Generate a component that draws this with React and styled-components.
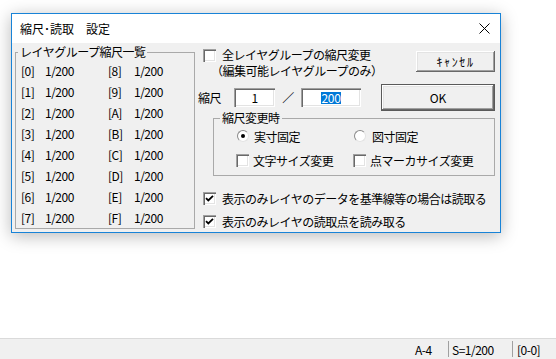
import React from "react";
import styled, { createGlobalStyle } from "styled-components";

const GlobalStyle = createGlobalStyle`
  html, body { margin: 0; padding: 0; background: #fff; }
  body {
    font-family: "Noto Sans CJK JP", "Noto Sans", sans-serif;
    font-size: 12px;
    letter-spacing: -0.5px;
    color: #000;
  }
`;

const Screen = styled.div`
  width: 556px;
  height: 359px;
  display: flex;
  flex-direction: column;
  overflow: hidden;
`;

const Dialog = styled.div`
  margin: 13px 0 0 11px;
  width: 490px;
  height: 220px;
  box-sizing: border-box;
  border: 1px solid #1883d7;
  background: #f0f0f0;
  box-shadow: 0 3px 16px rgba(0, 0, 0, 0.28);
  display: flex;
  flex-direction: column;
`;

const TitleBar = styled.div`
  height: 29px;
  background: #fff;
  display: flex;
  align-items: center;
  justify-content: space-between;
  padding: 0 10px 0 8px;
  line-height: 14px;
  letter-spacing: 0;
`;

const Body = styled.div`
  flex: 1;
  display: flex;
  gap: 3px;
  padding: 2px 5px 0 3px;
`;

const Group = styled.fieldset`
  margin: 0;
  padding: 0;
  box-sizing: border-box;
  border: 1px solid #a9a9a9;
  min-width: 0;
`;

const Legend = styled.legend`
  padding: 0 2px;
  margin-left: ${(p) => p.$offset}px;
  line-height: 14px;
`;

const ListGroup = styled(Group)`
  width: 180px;
  height: 184px;
  padding: 1px 0 0 5px;
`;

const ScaleGrid = styled.div`
  display: grid;
  grid-template-columns: 24px 63px 26px auto;
  grid-auto-rows: 21px;
  align-items: center;
  line-height: 14px;
`;

const Side = styled.div`
  width: 297px;
  display: flex;
  flex-direction: column;
`;

const TopRow = styled.div`
  margin-top: 2px;
  height: 30px;
  display: flex;
  justify-content: space-between;
  align-items: flex-start;
`;

const CheckLine = styled.label`
  display: flex;
  align-items: ${(p) => (p.$top ? "flex-start" : "center")};
  gap: ${(p) => p.$gap ?? 6}px;
  padding-left: ${(p) => p.$indent ?? 0}px;
  line-height: 15px;
  white-space: nowrap;
`;

const Box = styled.span`
  width: 13px;
  height: 13px;
  flex: none;
  box-sizing: border-box;
  background: #fff;
  margin-top: ${(p) => (p.$top ? 2 : 0)}px;
  box-shadow: inset 1px 1px 0 #a0a0a0, inset 2px 2px 0 #696969,
    inset -1px -1px 0 #fff, inset -2px -2px 0 #e3e3e3;
  display: flex;
  align-items: center;
  justify-content: center;
`;

const Round = styled.span`
  width: 12px;
  height: 12px;
  flex: none;
  box-sizing: border-box;
  border-radius: 50%;
  background: #fff;
  margin-left: 1px;
  border: 1px solid;
  border-color: #8a8a8a #e3e3e3 #e3e3e3 #8a8a8a;
  display: flex;
  align-items: center;
  justify-content: center;
`;

const Dot = styled.span`
  width: 4px;
  height: 4px;
  border-radius: 50%;
  background: #000;
`;

const Lines = styled.span`
  display: flex;
  flex-direction: column;
  line-height: 16px;
`;

const SubLine = styled.span`
  margin-left: -11px;
`;

const Button = styled.button`
  font: inherit;
  letter-spacing: ${(p) => p.$spacing ?? 0}px;
  color: #000;
  padding: 0;
  width: ${(p) => p.$w}px;
  height: ${(p) => p.$h}px;
  margin-top: ${(p) => p.$mt ?? 0}px;
  margin-left: ${(p) => (p.$push ? "auto" : "0")};
  box-sizing: border-box;
  background: #f0f0f0;
  border: ${(p) => (p.$default ? "1px solid #5a5a5a" : "none")};
  box-shadow: inset -1px -1px 0 #696969, inset 1px 1px 0 #fff,
    inset -2px -2px 0 #a0a0a0, inset 2px 2px 0 #e3e3e3;
  line-height: 14px;
`;

const ScaleRow = styled.div`
  margin-top: 7px;
  height: 27px;
  display: flex;
  align-items: center;
`;

const Label = styled.span`
  width: 24px;
  margin-right: 12px;
  line-height: 14px;
`;

const Field = styled.div`
  width: ${(p) => p.$w}px;
  height: 19px;
  box-sizing: border-box;
  background: #fff;
  box-shadow: inset 1px 1px 0 #a0a0a0, inset 2px 2px 0 #696969,
    inset -1px -1px 0 #fff, inset -2px -2px 0 #e3e3e3;
  display: flex;
  align-items: center;
  justify-content: center;
  line-height: 12px;
  padding-top: 1px;
`;

const Selected = styled.span`
  background: #0078d7;
  color: #fff;
  letter-spacing: -0.3px;
`;

const Slash = styled.span`
  width: 26px;
  text-align: center;
  line-height: 14px;
`;

const ModeGroup = styled(Group)`
  margin-left: 15px;
  width: 282px;
  height: 65px;
  padding: 3px 0 0 22px;
`;

const ModeGrid = styled.div`
  display: grid;
  grid-template-columns: 117px auto;
  grid-auto-rows: 16px;
  row-gap: 8px;
  align-items: center;
`;

const OptionRow = styled.div`
  margin-top: ${(p) => p.$mt}px;
`;

const StatusBar = styled.div`
  margin-top: auto;
  height: 20px;
  border-top: 1px solid #dadada;
  background: #f0f0f0;
  display: flex;
  justify-content: flex-end;
  align-items: center;
  line-height: 14px;
`;

const Pane = styled.div`
  width: ${(p) => p.$w}px;
  box-sizing: border-box;
  padding-left: ${(p) => p.$pad}px;
  border-left: ${(p) => (p.$sep ? "1px solid #a0a0a0" : "none")};
  height: 16px;
  display: flex;
  align-items: center;
  padding-top: 2px;
`;

const Check = () => (
  <svg width="9" height="9" viewBox="0 0 9 9">
    <polyline points="1,4.2 3.3,6.5 8,1.8" fill="none" stroke="#000" strokeWidth="1.8" />
  </svg>
);

const Close = () => (
  <svg width="11" height="11" viewBox="0 0 11 11">
    <path d="M0.5 0.5 L10.5 10.5 M10.5 0.5 L0.5 10.5" stroke="#000" strokeWidth="1" />
  </svg>
);

const ids = ["0", "1", "2", "3", "4", "5", "6", "7"];
const ids2 = ["8", "9", "A", "B", "C", "D", "E", "F"];

export default function App() {
  return (
    <Screen>
      <GlobalStyle />
      <Dialog>
        <TitleBar>
          <span>縮尺･読取　設定</span>
          <Close />
        </TitleBar>
        <Body>
          <ListGroup>
            <Legend $offset={-3}>レイヤグループ縮尺一覧</Legend>
            <ScaleGrid>
              {ids.map((id, i) => (
                <React.Fragment key={id}>
                  <span>[{id}]</span>
                  <span>1/200</span>
                  <span>[{ids2[i]}]</span>
                  <span>1/200</span>
                </React.Fragment>
              ))}
            </ScaleGrid>
          </ListGroup>
          <Side>
            <TopRow>
              <CheckLine $top $indent={5}>
                <Box $top />
                <Lines>
                  <span>全レイヤグループの縮尺変更</span>
                  <SubLine>（編集可能レイヤグループのみ）</SubLine>
                </Lines>
              </CheckLine>
              <Button $w={79} $h={21} $mt={4} $spacing={1.6}>ｷｬﾝｾﾙ</Button>
            </TopRow>
            <ScaleRow>
              <Label>縮尺</Label>
              <Field $w={41}><span>1</span></Field>
              <Slash>／</Slash>
              <Field $w={60}><Selected>200</Selected></Field>
              <Button $w={114} $h={27} $push $default>OK</Button>
            </ScaleRow>
            <ModeGroup>
              <Legend $offset={-16}>縮尺変更時</Legend>
              <ModeGrid>
                <CheckLine $gap={5}>
                  <Round><Dot /></Round>実寸固定
                </CheckLine>
                <CheckLine $gap={6}>
                  <Round />図寸固定
                </CheckLine>
                <CheckLine $gap={4}>
                  <Box />文字サイズ変更
                </CheckLine>
                <CheckLine $gap={4}>
                  <Box />点マーカサイズ変更
                </CheckLine>
              </ModeGrid>
            </ModeGroup>
            <OptionRow $mt={15}>
              <CheckLine $indent={5}>
                <Box><Check /></Box>表示のみレイヤのデータを基準線等の場合は読取る
              </CheckLine>
            </OptionRow>
            <OptionRow $mt={8}>
              <CheckLine $indent={5}>
                <Box><Check /></Box>表示のみレイヤの読取点を読み取る
              </CheckLine>
            </OptionRow>
          </Side>
        </Body>
      </Dialog>
      <StatusBar>
        <Pane $w={38} $pad={5}>A-4</Pane>
        <Pane $w={64} $pad={3} $sep>S=1/200</Pane>
        <Pane $w={44} $pad={4} $sep>[0-0]</Pane>
      </StatusBar>
    </Screen>
  );
}
